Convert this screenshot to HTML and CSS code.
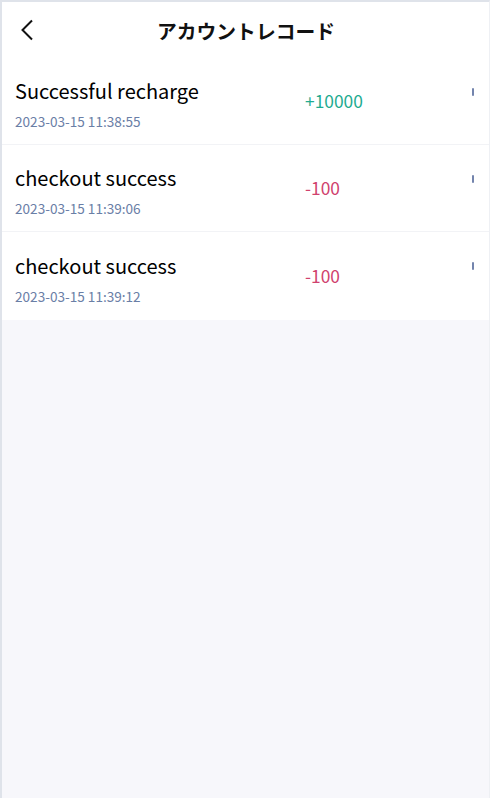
FILE: index.html
```html
<!DOCTYPE html>
<html lang="ja">
<head>
<meta charset="utf-8">
<link rel="stylesheet" href="styles.css">
</head>
<body>
<div class="app">
  <header class="nav">
    <span class="back">
      <svg width="16" height="22" viewBox="0 0 16 22"><path d="M13 1.5 L3.5 11 L13 20.5" fill="none" stroke="#111" stroke-width="2"/></svg>
    </span>
    <h1 class="title">アカウントレコード</h1>
  </header>
  <ul class="list">
    <li class="row">
      <div class="info">
        <div class="name">Successful recharge</div>
        <div class="date">2023-03-15 11:38:55</div>
      </div>
      <div class="amount plus">+10000</div>
      <span class="mark"></span>
    </li>
    <li class="row">
      <div class="info">
        <div class="name">checkout success</div>
        <div class="date">2023-03-15 11:39:06</div>
      </div>
      <div class="amount minus">-100</div>
      <span class="mark"></span>
    </li>
    <li class="row">
      <div class="info">
        <div class="name">checkout success</div>
        <div class="date">2023-03-15 11:39:12</div>
      </div>
      <div class="amount minus">-100</div>
      <span class="mark"></span>
    </li>
  </ul>
</div>
</body>
</html>
```
FILE: styles.css
```css
html, body { margin: 0; padding: 0; height: 100%; }
body {
  font-family: "Noto Sans CJK JP", "Noto Sans", sans-serif;
  background: #fff;
}
.app {
  box-sizing: border-box;
  height: 798px;
  background: #f7f7fb;
  border-top: 2px solid #dfe3ea;
  border-left: 2px solid #dfe3ea;
  border-right: 1px solid #eef0f4;
  display: flex;
  flex-direction: column;
}
.nav {
  height: 56px;
  background: #fff;
  display: flex;
  align-items: center;
  justify-content: center;
  position: relative;
}
.back {
  position: absolute;
  left: 17px;
  top: 17px;
  display: flex;
}
.title {
  margin: 0;
  font-size: 19.8px;
  font-weight: 700;
  color: #111;
  padding-left: 1px;
}
.list {
  list-style: none;
  margin: 0;
  padding: 0;
  background: #fff;
}
.row {
  display: grid;
  grid-template-columns: 290px 1fr auto;
  align-items: center;
  height: 87px;
  padding: 0 15px 0 13px;
  box-sizing: border-box;
  border-bottom: 1px solid #f2f3f6;
}
.row:last-child { border-bottom: none; height: 88px; }
.info { display: flex; flex-direction: column; gap: 6px; padding-top: 5px; }
.name { font-size: 20px; color: #000; line-height: 28px; }
.date { font-size: 13.6px; color: #6a7ea6; line-height: 20px; }
.amount { font-size: 17.4px; line-height: 24px; }
.plus { color: #1fab91; }
.minus { color: #d0426e; }
.mark {
  width: 2px;
  height: 8px;
  background: #7384ad;
  border-radius: 1px;
  align-self: start;
  margin-top: 30px;
}
```
